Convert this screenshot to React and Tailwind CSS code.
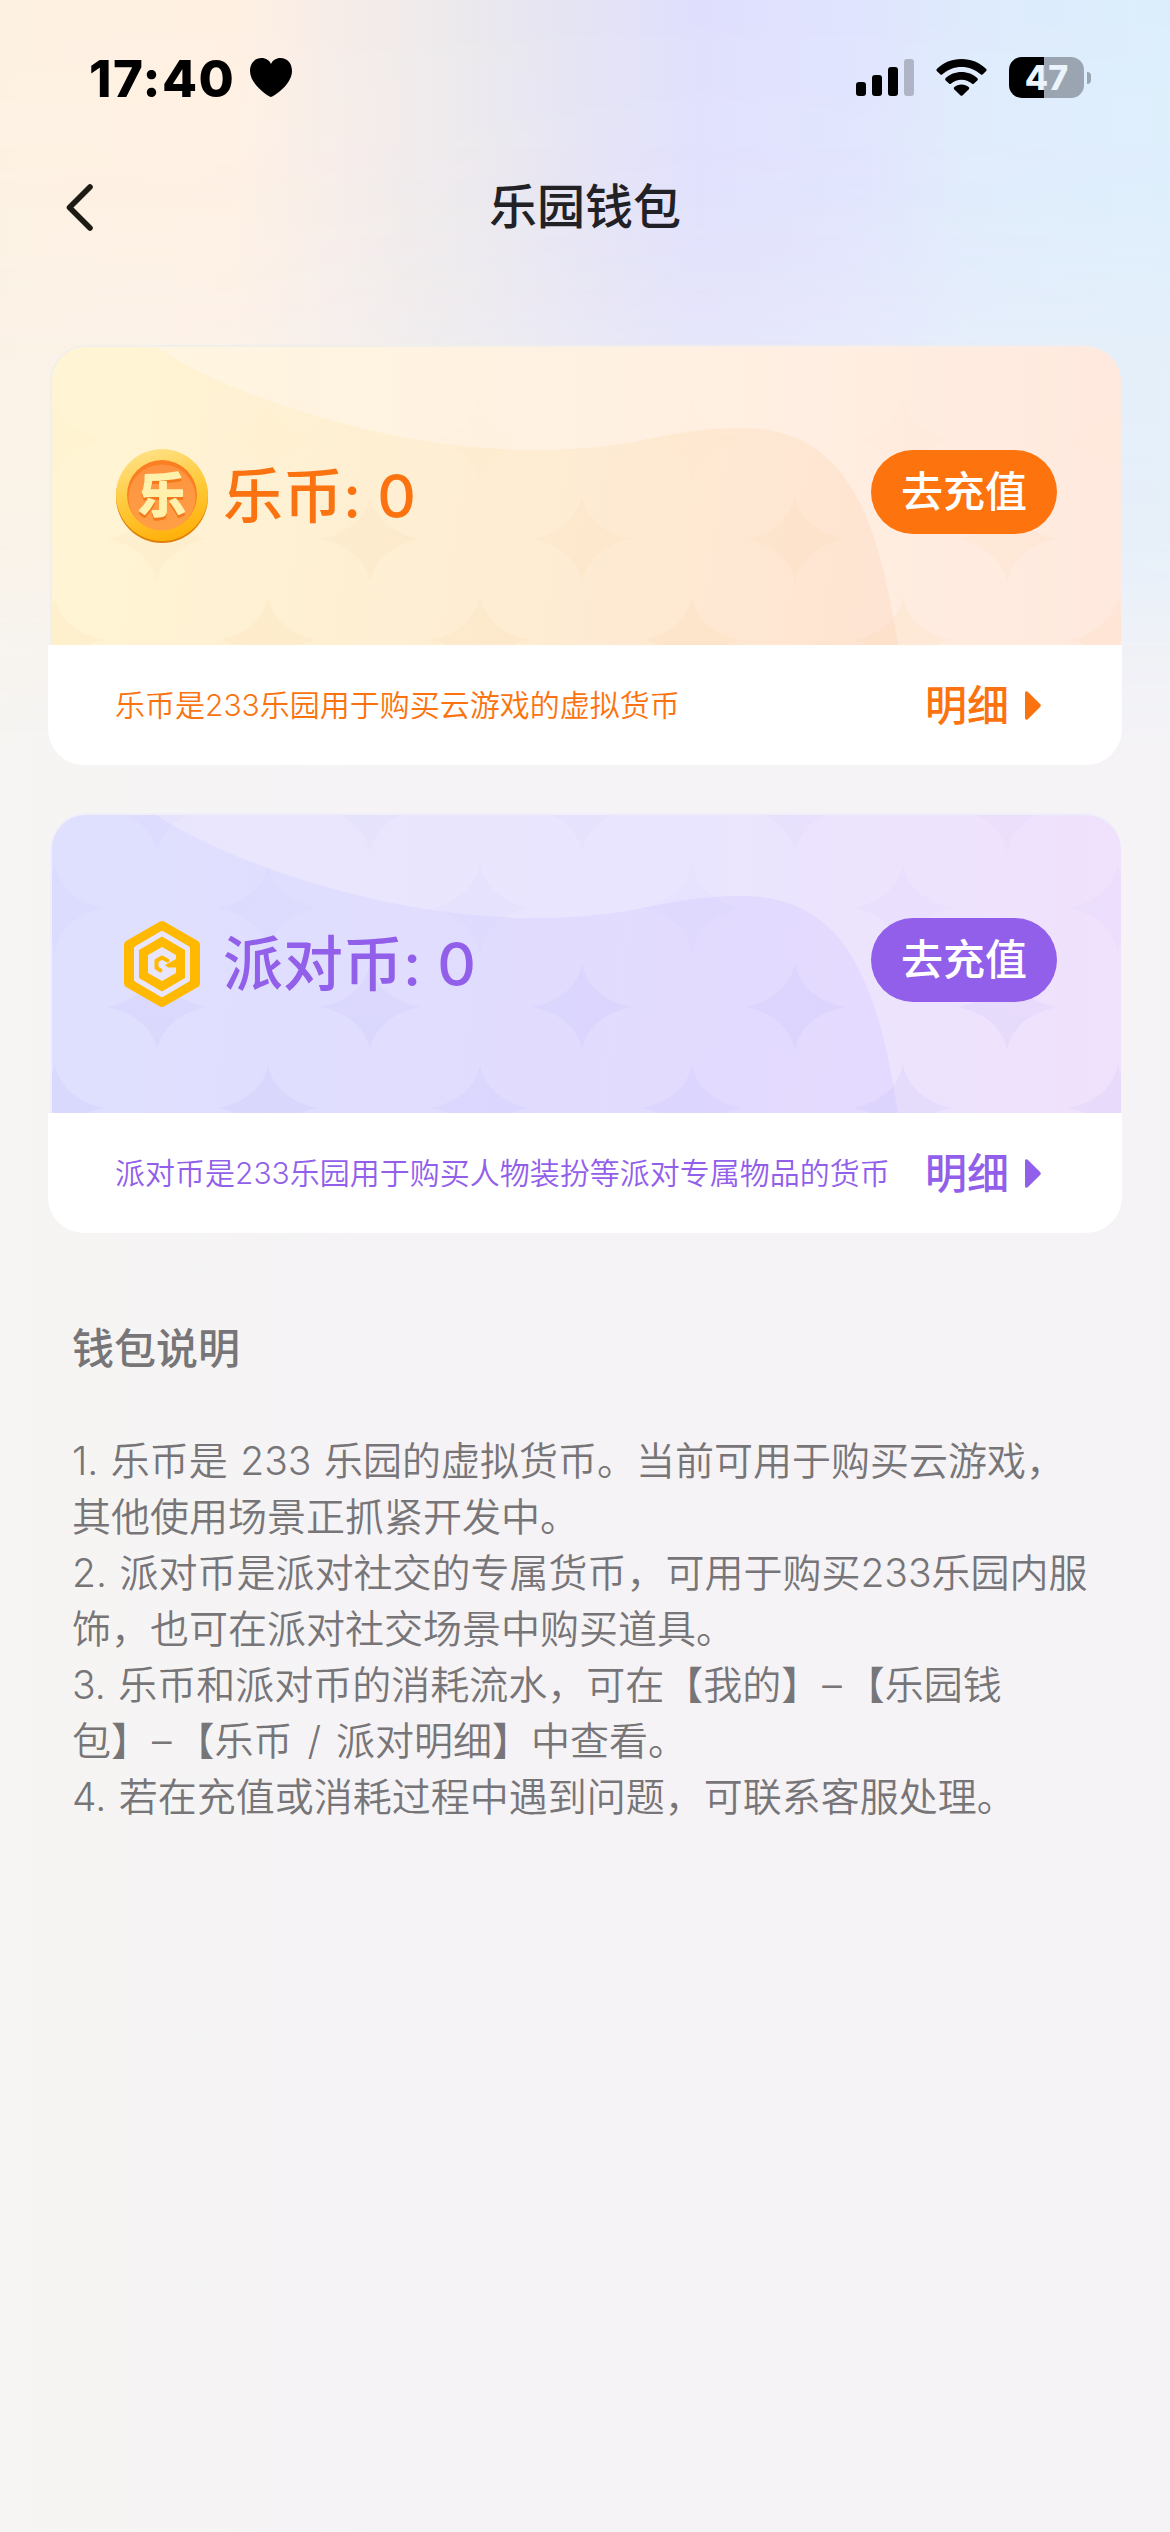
import React from 'react'

const wallets = [
  {
    id: 'le',
    name: '乐币',
    balance: 0,
    desc: '乐币是233乐园用于购买云游戏的虚拟货币',
    text: 'text-[#fb7310]',
    button: 'bg-[#fd730e]',
    edge: 'border-[#f1efec]',
    back: ['#fff6e0', '#fff0e2', '#ffe9de'],
    wave: ['#fff5d4', '#feecd3', '#fee4d2'],
    star: '#fbd09c',
    starRows: [0, 0.02, 0.1, 0.12],
  },
  {
    id: 'party',
    name: '派对币',
    balance: 0,
    desc: '派对币是233乐园用于购买人物装扮等派对专属物品的货币',
    text: 'text-[#925feb]',
    button: 'bg-[#925feb]',
    edge: 'border-[#f0eef8]',
    back: ['#e8e6fd', '#eae5fe', '#f0e1fc'],
    wave: ['#dfe0fe', '#e1dcfe', '#e4daff'],
    star: '#bab4f8',
    starRows: [0.05, 0.06, 0.13, 0.14],
  },
]

const notes = [
  ['1. 乐币是 233 乐园的虚拟货币。当前可用于购买云游戏，', '其他使用场景正抓紧开发中。'],
  ['2. 派对币是派对社交的专属货币，可用于购买233乐园内服', '饰，也可在派对社交场景中购买道具。'],
  ['3. 乐币和派对币的消耗流水，可在【我的】–【乐园钱', '包】–【乐币 / 派对明细】中查看。'],
  ['4. 若在充值或消耗过程中遇到问题，可联系客服处理。'],
]

const starRows = [
  { y: -6, xs: [105, 318, 530, 743, 955] },
  { y: 93, xs: [3, 216, 428, 640, 851, 1066] },
  { y: 192, xs: [105, 318, 530, 743, 955] },
  { y: 293, xs: [3, 216, 428, 640, 851, 1066] },
]

const StatusBar = () => (
  <div className="flex h-[155px] items-center justify-between pl-[89px] pr-[79px]">
    <div className="flex items-center gap-[15px]">
      <span className="pt-[1px] text-[51px] leading-none font-[780] tracking-[1.4px] text-black">17:40</span>
      <svg width="42" height="39" viewBox="0 0 42 39" fill="#000">
        <path d="M21 39C19.500 39 0 27 0 13C0 5 5 0 11.500 0C16 0 19.500 2.500 21 6C22.500 2.500 26 0 30.500 0C37 0 42 5 42 13C42 27 22.500 39 21 39Z" />
      </svg>
    </div>
    <div className="flex items-center">
      <svg width="58" height="37" viewBox="0 0 58 37" fill="#000">
        <rect x="0" y="23" width="10" height="14" rx="3" />
        <rect x="16" y="16" width="10" height="21" rx="3" />
        <rect x="32" y="8" width="10" height="29" rx="3" />
        <rect x="48" y="0" width="10" height="37" rx="3" opacity="0.22" />
      </svg>
      <svg className="ml-[22px]" width="51" height="37" viewBox="0 0 51 37" fill="#000">
        <path d="M25.500 0C35 0 44 3.700 50 9.800Q51.200 11 50 12.200L46.800 15.200Q45.700 16.200 44.600 15.200C39.500 10.500 32.800 7.900 25.500 7.900C18.200 7.900 11.500 10.500 6.400 15.200Q5.300 16.200 4.200 15.200L1 12.200Q-0.200 11 1 9.800C7 3.700 16 0 25.500 0Z" />
        <path d="M25.500 13C31.600 13 37.200 15.300 41.300 19.100Q42.500 20.300 41.300 21.500L38 24.500Q36.900 25.500 35.800 24.500C33 22.100 29.400 20.700 25.500 20.700C21.600 20.700 18 22.100 15.200 24.500Q14.100 25.500 13 24.500L9.700 21.500Q8.500 20.300 9.700 19.100C13.800 15.300 19.400 13 25.500 13Z" />
        <path d="M25.500 25.500C28.300 25.500 30.800 26.400 32.600 28Q33.800 29.200 32.600 30.400L26.700 36.200Q25.500 37.300 24.300 36.200L18.400 30.400Q17.200 29.200 18.400 28C20.200 26.400 22.700 25.500 25.500 25.500Z" />
      </svg>
      <div className="ml-[22px] flex h-[41px] w-[75px] items-center justify-center rounded-[13px] bg-linear-to-r from-black from-[47%] to-[#9aa5b1] to-[47%]">
        <span className="text-[34px] leading-none font-extrabold text-[#ebf3fd]">47</span>
      </div>
      <div className="ml-[3px] h-[12px] w-[4px] rounded-r-full bg-[#9aa5b1]" />
    </div>
  </div>
)

const NavBar = () => (
  <div className="grid h-[104px] grid-cols-[1fr_auto_1fr] items-center pl-[66px]">
    <svg width="27" height="47" viewBox="0 0 27 47" fill="none" stroke="#1e1a14" strokeWidth="5.600" strokeLinecap="round" strokeLinejoin="round">
      <path d="M24 3L3.500 23.500L24 44" />
    </svg>
    <h1 className="mr-[66px] text-[48px] leading-none font-medium text-[#222226]">乐园钱包</h1>
  </div>
)

const LeCoin = () => (
  <svg width="94" height="96" viewBox="0 0 94 96">
    <defs>
      <linearGradient id="coinRim" x1="0.2" y1="0" x2="0.5" y2="1">
        <stop offset="0" stopColor="#ffe28a" />
        <stop offset="0.5" stopColor="#ffcb3e" />
        <stop offset="1" stopColor="#ffb10b" />
      </linearGradient>
      <linearGradient id="coinFace" x1="0" y1="0" x2="0" y2="1">
        <stop offset="0" stopColor="#fd9240" />
        <stop offset="1" stopColor="#ff9f45" />
      </linearGradient>
    </defs>
    <circle cx="47" cy="49" r="46" fill="#e07f08" />
    <circle cx="47" cy="47" r="46" fill="url(#coinRim)" />
    <circle cx="47" cy="47" r="35" fill="#fb7f22" />
    <ellipse cx="47" cy="49.500" rx="33.500" ry="33" fill="url(#coinFace)" />
    <g fontSize="47" fontWeight="700" textAnchor="middle" strokeWidth="2" strokeLinejoin="round">
      <text x="47" y="66.500" fill="#f27a1c" stroke="#f27a1c">乐</text>
      <text x="47" y="64" fill="#fff0ac" stroke="#fff0ac">乐</text>
    </g>
  </svg>
)

const PartyCoin = () => (
  <svg width="94" height="96" viewBox="0 0 94 96" strokeLinejoin="round">
    <path d="M47 9L81 28.500V67.500L47 87L13 67.500V28.500Z" fill="#ffb900" stroke="#ffb900" strokeWidth="8" />
    <path d="M47 17.500L72.500 32.500V63.500L47 78.500L21.500 63.500V32.500Z" fill="#ffb900" stroke="#e9e6fb" strokeWidth="5" />
    {/* G mark: pale hexagon with the counter cut back out of it */}
    <path d="M47 32L60 39.500V56.500L47 64L34 56.500V39.500Z" fill="#e9e6fb" stroke="#e9e6fb" strokeWidth="2" />
    <path d="M52.500 44.500L47 41.500L41.500 44.800V51.800L45.500 54.500" fill="none" stroke="#ffb900" strokeWidth="4" strokeLinecap="round" />
    <path d="M50 49L62 42.500V51.500L53 51.500Z" fill="#ffb900" />
  </svg>
)

const CardArt = ({ wallet }) => (
  <svg className="absolute inset-0 size-full" viewBox="0 0 1069 298" preserveAspectRatio="none">
    <defs>
      <linearGradient id={`${wallet.id}-back`}>
        <stop offset="0" stopColor={wallet.back[0]} />
        <stop offset="0.6" stopColor={wallet.back[1]} />
        <stop offset="1" stopColor={wallet.back[2]} />
      </linearGradient>
      <linearGradient id={`${wallet.id}-wave`} gradientUnits="userSpaceOnUse" x1="0" y1="0" x2="850" y2="120">
        <stop offset="0" stopColor={wallet.wave[0]} />
        <stop offset="0.6" stopColor={wallet.wave[1]} />
        <stop offset="1" stopColor={wallet.wave[2]} />
      </linearGradient>
    </defs>
    <rect width="1069" height="298" fill={`url(#${wallet.id}-back)`} />
    <path
      d="M0 0H104C180 50 340 103 480 103C590 103 610 81 690 81C790 81 825 160 846 298H0Z"
      fill={`url(#${wallet.id}-wave)`}
    />
    {starRows.map((row, i) => (
      <g key={row.y} fill={wallet.star} opacity={wallet.starRows[i]}>
        {row.xs.map((x) => (
          <path
            key={x}
            transform={`translate(${x} ${row.y})`}
            d="M0 -44C4 -20 24 -5 50 0C24 5 4 20 0 44C-4 20 -24 5 -50 0C-24 -5 -4 -20 0 -44Z"
          />
        ))}
      </g>
    ))}
  </svg>
)

const WalletCard = ({ wallet }) => (
  <section className={wallet.text}>
    <div className={`relative mr-px ml-[2px] flex h-[300px] items-center overflow-hidden rounded-t-[36px] border-t-2 border-l-2 pr-[64px] pl-[63px] ${wallet.edge}`}>
      <CardArt wallet={wallet} />
      <div className="relative flex flex-1 items-center">
        {wallet.id === 'le' ? <LeCoin /> : <PartyCoin />}
        <span className="ml-[14px] text-[60px] leading-none font-medium [font-feature-settings:'calt'_0]">
          {wallet.name}: {wallet.balance}
        </span>
      </div>
      <button className={`relative mb-[8px] h-[84px] w-[186px] rounded-full text-[42px] leading-none font-medium text-white ${wallet.button}`}>
        去充值
      </button>
    </div>
    <div className="flex h-[120px] items-center justify-between rounded-b-[36px] bg-white pr-[81px] pl-[67px]">
      <p className="text-[30px] leading-none font-[350]">{wallet.desc}</p>
      <button className="flex items-center gap-[16px] pt-[2px] text-[42px] leading-none font-medium">
        明细
        <svg className="mb-[2px]" width="16" height="29" viewBox="0 0 16 29" fill="currentColor">
          <path d="M0 2C0 0.300 1.800 -0.400 3 0.900L15.300 13.300Q16.300 14.500 15.300 15.700L3 28.100C1.800 29.400 0 28.700 0 27Z" />
        </svg>
      </button>
    </div>
  </section>
)

// The dash between two 【】 groups gets a little room around it
const NoteLine = ({ text }) => {
  const [before, after] = text.split('–')
  return (
    <p>
      {before}
      {after && <span className="mr-[4px] ml-[2px]">–</span>}
      {after && <span className="[word-spacing:4px]">{after}</span>}
    </p>
  )
}

const App = () => {
  return (
    <div
      lang="zh-CN"
      className="relative min-h-[2532px] w-[1170px] bg-linear-to-r from-[#f6f5f3] to-[#f5f3f6] to-[34%] font-['Inter','Noto_Sans_CJK_SC',sans-serif]"
    >
      {/* Colour wash behind the header, fading into the page */}
      <div className="absolute inset-x-0 top-0 h-[780px] bg-[linear-gradient(to_right,#fdf1e1_0,#fff0e2_230px,#f7ede8_330px,#ece9ec_460px,#e4e3f5_590px,#dfdffd_700px,#e0e4fe_860px,#deebfc_970px,#dceefc_1170px)] mask-[linear-gradient(to_bottom,#000_0,#000000e6_200px,#000000b0_345px,#00000090_540px,#00000028_670px,#00000000_750px)]" />
      <div className="relative">
        <StatusBar />
        <NavBar />
        <main className="flex flex-col gap-[48px] px-[48px] pt-[86px]">
          {wallets.map((wallet) => (
            <WalletCard key={wallet.id} wallet={wallet} />
          ))}
        </main>
        <footer className="px-[72px] pt-[86px] text-[#777577]">
          <h2 className="text-[42px] leading-[60px] font-medium">钱包说明</h2>
          <div className="mt-[54px] text-[39px] leading-[56px] font-[350] whitespace-nowrap [word-spacing:1.5px]">
            {notes.map((lines) => lines.map((line) => <NoteLine key={line} text={line} />))}
          </div>
        </footer>
      </div>
    </div>
  )
}

export default App
